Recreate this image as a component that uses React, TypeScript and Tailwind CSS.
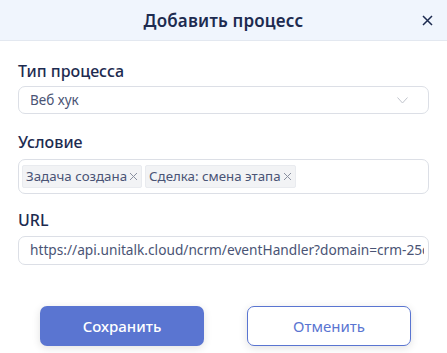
import React from "react";

export default function App() {
  return (
    <div
      className="w-[447px] h-[353px] bg-white overflow-hidden flex flex-col"
      style={{ fontFamily: '"Noto Sans", "Open Sans", sans-serif' }}
    >
      <div className="h-[41px] shrink-0 bg-[#f0f5fd] border-b border-[#e3e8f0] relative flex items-center justify-center">
        <span className="text-[17px] font-semibold text-[#1d2b50] leading-none tracking-[0.2px]">Добавить процесс</span>
        <svg className="absolute right-[14px] top-[15px]" width="11" height="11" viewBox="0 0 11 11">
          <path d="M1 1 L10 10 M10 1 L1 10" stroke="#1d2b50" strokeWidth="1.5" />
        </svg>
      </div>
      <div className="flex flex-col px-[18px] pt-[20px]">
        <div className="text-[16px] font-medium text-[#1d2b50] leading-[20px]">Тип процесса</div>
        <div className="mt-[5px] h-[28px] border border-[#dcdfe6] rounded-[7px] flex items-center justify-between pl-[11px] pr-[20px]">
          <span className="text-[13.5px] text-[#4a5475]">Веб хук</span>
          <svg width="11" height="7" viewBox="0 0 11 7">
            <path d="M0.5 0.5 L5.5 6 L10.5 0.5" stroke="#c0c4cc" strokeWidth="1" fill="none" />
          </svg>
        </div>
        <div className="mt-[18px] text-[16px] font-medium text-[#1d2b50] leading-[20px]">Условие</div>
        <div className="mt-[7px] h-[35px] border border-[#dcdfe6] rounded-[7px] flex items-center gap-[3px] pl-[3px]">
          <span className="h-[23px] px-[3px] bg-[#f2f3f5] border border-[#e9ebef] rounded-[2px] flex items-center text-[13.3px] text-[#4a5475] whitespace-nowrap">
            Задача создана
            <svg width="9" height="9" viewBox="0 0 9 9" className="ml-[2px]">
              <path d="M1 1 L8 8 M8 1 L1 8" stroke="#8a90a0" strokeWidth="1" />
            </svg>
          </span>
          <span className="h-[23px] px-[3px] bg-[#f2f3f5] border border-[#e9ebef] rounded-[2px] flex items-center text-[13.3px] text-[#4a5475] whitespace-nowrap">
            Сделка: смена этапа
            <svg width="9" height="9" viewBox="0 0 9 9" className="ml-[2px]">
              <path d="M1 1 L8 8 M8 1 L1 8" stroke="#8a90a0" strokeWidth="1" />
            </svg>
          </span>
        </div>
        <div className="mt-[16px] text-[16px] font-medium text-[#1d2b50] leading-[20px]">URL</div>
        <div className="mt-[6px] h-[29px] border border-[#dcdfe6] rounded-[7px] flex items-center pl-[11px] pr-[4px] overflow-hidden">
          <span className="text-[13.7px] text-[#4a5475] whitespace-nowrap overflow-hidden">
            https://api.unitalk.cloud/ncrm/eventHandler?domain=crm-25c
          </span>
        </div>
        <div className="mt-[41px] flex gap-[43px] pl-[22px]">
          <button className="shrink-0 w-[164px] h-[40px] rounded-[7px] bg-[#5a75d1] text-white text-[15px] font-medium shadow-[0_2px_8px_rgba(0,0,0,0.12)]">
            Сохранить
          </button>
          <button className="shrink-0 w-[164px] h-[40px] rounded-[7px] bg-white border border-[#5a75d1] text-[#5a75d1] text-[15px] shadow-[0_2px_8px_rgba(0,0,0,0.12)]">
            Отменить
          </button>
        </div>
      </div>
    </div>
  );
}
